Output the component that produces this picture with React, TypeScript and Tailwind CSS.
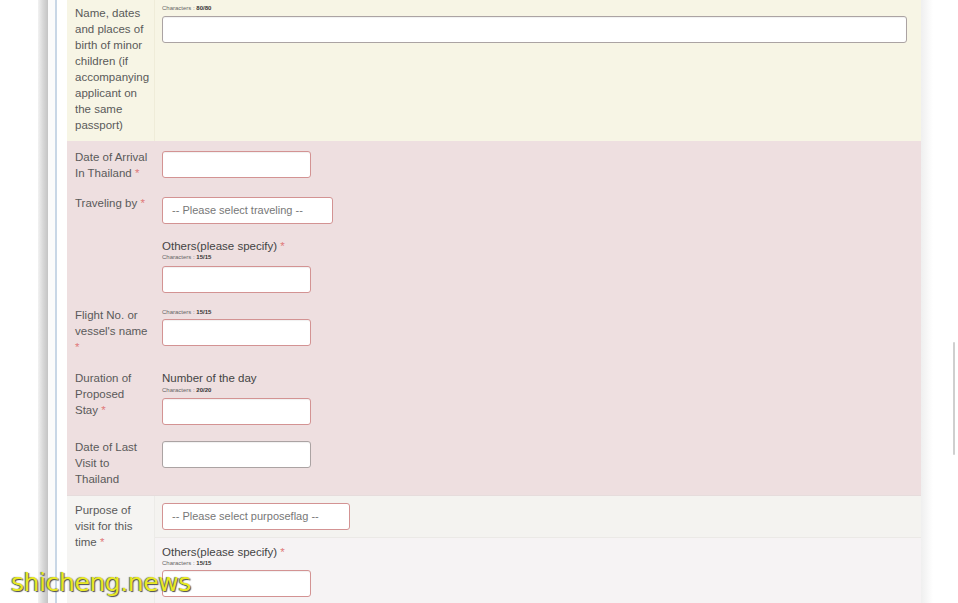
import React from 'react';

const font = "font-['Liberation_Sans',Arial,sans-serif]";

function Req() {
  return <span className="text-[#e07a7a]"> *</span>;
}

function Chars({ value }: { value: string }) {
  return (
    <div className="text-[6px] leading-[8px] text-[#666]">
      Characters : <span className="font-bold text-[#333]">{value}</span>
    </div>
  );
}

function TextBox({ width, tone = 'red', className = '' }: { width: number | string; tone?: 'red' | 'gray'; className?: string }) {
  const border = tone === 'red' ? 'border-[#d39393]' : 'border-[#aba3a3]';
  return (
    <div
      className={`h-[27px] rounded-[3px] border bg-white shadow-[inset_0_1px_1px_rgba(0,0,0,0.06)] ${border} ${className}`}
      style={{ width }}
    />
  );
}

function Select({ width, text, className = '' }: { width: number; text: string; className?: string }) {
  return (
    <div
      className={`flex h-[27px] items-center rounded-[3px] border border-[#d39393] bg-white pl-[9px] text-[11px] text-[#777] ${className}`}
      style={{ width }}
    >
      {text}
    </div>
  );
}

function Label({ children }: { children: React.ReactNode }) {
  return (
    <div className="w-[88px] shrink-0 pl-[8px] pr-[4px] text-[11.5px] leading-[16px] text-[#5a5a5a]">
      {children}
    </div>
  );
}

export default function App() {
  return (
    <div className={`relative h-[603px] w-[958px] overflow-hidden bg-white ${font}`}>
      <div className="flex h-full">
        <div className="w-[38px] shrink-0" />
        <div className="w-[10px] shrink-0 bg-gradient-to-r from-[#f2f2f2] via-[#d8d8d8] to-[#c4c4c4]" />
        <div className="w-[7px] shrink-0 bg-[#fbfbfb]" />
        <div className="w-[2px] shrink-0 bg-[#c9d7e6]" />
        <div className="w-[10px] shrink-0" />

        <main className="flex w-[854px] shrink-0 flex-col">
          {/* children */}
          <section className="flex h-[141px] shrink-0 bg-[#f7f5e5]">
            <div className="w-[88px] shrink-0 border-r border-[#efecd9] pl-[8px] pr-[4px] pt-[5px] text-[11.5px] leading-[16px] text-[#5a5a5a]">
              Name, dates and places of birth of minor children (if accompanying applicant on the same passport)
            </div>
            <div className="flex-1 pl-[7px] pt-[4px]">
              <Chars value="80/80" />
              <TextBox width={745} tone="gray" className="mt-[4px] border-[#a9a9a9]" />
            </div>
          </section>

          {/* travel */}
          <section className="flex shrink-0 flex-col bg-[#eedfe0] pb-[8px]">
            <div className="mt-[8px] flex">
              <Label>
                Date of Arrival In Thailand<Req />
              </Label>
              <div className="pl-[7px] pt-[2px]">
                <TextBox width={149} />
              </div>
            </div>

            <div className="mt-[14px] flex">
              <Label>
                Traveling by<Req />
              </Label>
              <div className="flex flex-col pl-[7px] pt-[2px]">
                <Select width={171} text="-- Please select traveling --" />
                <div className="mt-[15px] text-[11.5px] leading-[14px] text-[#444]">
                  Others(please specify)<Req />
                </div>
                <Chars value="15/15" />
                <TextBox width={149} className="mt-[5px]" />
              </div>
            </div>

            <div className="mt-[14px] flex">
              <Label>
                Flight No. or vessel's name<br />
                <span className="text-[#e07a7a]">*</span>
              </Label>
              <div className="flex flex-col pl-[7px] pt-[1px]">
                <Chars value="15/15" />
                <TextBox width={149} className="mt-[3px]" />
              </div>
            </div>

            <div className="mt-[15px] flex">
              <Label>
                Duration of
                <br />
                Proposed
                <br />
                Stay<Req />
              </Label>
              <div className="flex flex-col pl-[7px] pt-[1px]">
                <div className="text-[11.5px] leading-[14px] text-[#444]">Number of the day</div>
                <div className="mt-[1px]">
                  <Chars value="20/20" />
                </div>
                <TextBox width={149} className="mt-[4px]" />
              </div>
            </div>

            <div className="mt-[14px] flex">
              <Label>Date of Last Visit to Thailand</Label>
              <div className="pl-[7px] pt-[2px]">
                <TextBox width={149} tone="gray" />
              </div>
            </div>
          </section>

          {/* purpose */}
          <section className="flex flex-1 border-t border-[#e6dcdc] bg-[#f5f4f2]">
            <div className="w-[88px] shrink-0 border-r border-[#ecebe8] pl-[8px] pr-[4px] pt-[6px] text-[11.5px] leading-[16px] text-[#5a5a5a]">
              Purpose of visit for this time<Req />
            </div>
            <div className="flex flex-1 flex-col">
              <div className="h-[42px] border-b border-[#ebe9e6] bg-[#f4f3f0] pl-[7px] pt-[7px]">
                <Select width={188} text="-- Please select purposeflag --" />
              </div>
              <div className="flex-1 bg-[#f6f3f4] pl-[7px] pt-[7px]">
                <div className="text-[11.5px] leading-[14px] text-[#444]">
                  Others(please specify)<Req />
                </div>
                <Chars value="15/15" />
                <TextBox width={149} className="mt-[3px]" />
              </div>
            </div>
          </section>
        </main>

        <div className="relative flex-1">
          <div className="absolute inset-y-0 left-0 w-[12px] bg-gradient-to-r from-[#efefef] to-white" />
          <div className="absolute left-[32px] top-[342px] h-[113px] w-[2px] rounded-full bg-[#cfcfcf]" />
        </div>
      </div>

      <div className="absolute left-[11px] top-[566px] font-['DejaVu_Sans',sans-serif] text-[25px] leading-[34px] tracking-[-0.4px] text-[#e8e824] [text-shadow:1px_1px_1px_#4a4a4a,-1px_0_1px_#6a6a6a]">
        shicheng.news
      </div>
    </div>
  );
}
